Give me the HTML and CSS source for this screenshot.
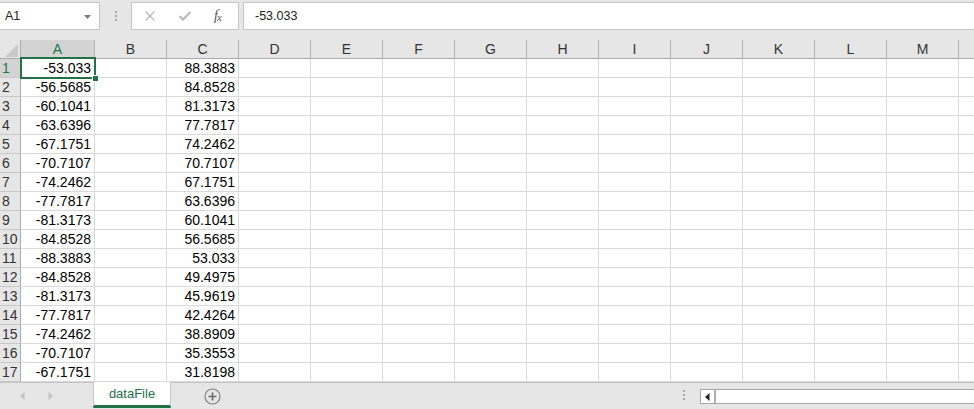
FILE: index.html
```html
<!DOCTYPE html>
<html>
<head>
<meta charset="utf-8">
<link rel="stylesheet" href="styles.css">
</head>
<body>
<div class="app">
  <div class="topbar">
    <div class="namebox">A1
      <svg class="caret" width="8" height="5" viewBox="0 0 8 5"><path d="M0 0H7L3.5 4Z" fill="#7a7a7a"/></svg>
    </div>
    <div class="grip"><i></i><i></i><i></i></div>
    <div class="fnbox">
      <svg class="ico" width="12" height="12" viewBox="0 0 12 12"><path d="M1.5 1.5L10.5 10.5M10.5 1.5L1.5 10.5" stroke="#b8b8b8" stroke-width="1.3" fill="none"/></svg>
      <svg class="ico" width="14" height="12" viewBox="0 0 14 12"><path d="M1.5 6.2L5 9.5L12.5 2" stroke="#b8b8b8" stroke-width="2" fill="none"/></svg>
      <span class="fx">f<span class="fxx">x</span></span>
    </div>
    <div class="formula">-53.033</div>
  </div>

  <div class="sheet">
    <div class="row head">
      <div class="corner"><svg width="13" height="13" viewBox="0 0 13 13"><path d="M13 0V13H0Z" fill="#c9c9c9"/></svg></div>
      <div class="ch sel colA">A</div><div class="ch">B</div><div class="ch">C</div><div class="ch">D</div><div class="ch">E</div><div class="ch">F</div><div class="ch">G</div><div class="ch">H</div><div class="ch">I</div><div class="ch">J</div><div class="ch">K</div><div class="ch">L</div><div class="ch">M</div><div class="ch last"></div>
    </div>
    <div class="row"><div class="rh sel">1</div><div class="c colA">-53.033</div><div class="c"></div><div class="c">88.3883</div><div class="c"></div><div class="c"></div><div class="c"></div><div class="c"></div><div class="c"></div><div class="c"></div><div class="c"></div><div class="c"></div><div class="c"></div><div class="c"></div><div class="c last"></div></div>
    <div class="row"><div class="rh">2</div><div class="c colA">-56.5685</div><div class="c"></div><div class="c">84.8528</div><div class="c"></div><div class="c"></div><div class="c"></div><div class="c"></div><div class="c"></div><div class="c"></div><div class="c"></div><div class="c"></div><div class="c"></div><div class="c"></div><div class="c last"></div></div>
    <div class="row"><div class="rh">3</div><div class="c colA">-60.1041</div><div class="c"></div><div class="c">81.3173</div><div class="c"></div><div class="c"></div><div class="c"></div><div class="c"></div><div class="c"></div><div class="c"></div><div class="c"></div><div class="c"></div><div class="c"></div><div class="c"></div><div class="c last"></div></div>
    <div class="row"><div class="rh">4</div><div class="c colA">-63.6396</div><div class="c"></div><div class="c">77.7817</div><div class="c"></div><div class="c"></div><div class="c"></div><div class="c"></div><div class="c"></div><div class="c"></div><div class="c"></div><div class="c"></div><div class="c"></div><div class="c"></div><div class="c last"></div></div>
    <div class="row"><div class="rh">5</div><div class="c colA">-67.1751</div><div class="c"></div><div class="c">74.2462</div><div class="c"></div><div class="c"></div><div class="c"></div><div class="c"></div><div class="c"></div><div class="c"></div><div class="c"></div><div class="c"></div><div class="c"></div><div class="c"></div><div class="c last"></div></div>
    <div class="row"><div class="rh">6</div><div class="c colA">-70.7107</div><div class="c"></div><div class="c">70.7107</div><div class="c"></div><div class="c"></div><div class="c"></div><div class="c"></div><div class="c"></div><div class="c"></div><div class="c"></div><div class="c"></div><div class="c"></div><div class="c"></div><div class="c last"></div></div>
    <div class="row"><div class="rh">7</div><div class="c colA">-74.2462</div><div class="c"></div><div class="c">67.1751</div><div class="c"></div><div class="c"></div><div class="c"></div><div class="c"></div><div class="c"></div><div class="c"></div><div class="c"></div><div class="c"></div><div class="c"></div><div class="c"></div><div class="c last"></div></div>
    <div class="row"><div class="rh">8</div><div class="c colA">-77.7817</div><div class="c"></div><div class="c">63.6396</div><div class="c"></div><div class="c"></div><div class="c"></div><div class="c"></div><div class="c"></div><div class="c"></div><div class="c"></div><div class="c"></div><div class="c"></div><div class="c"></div><div class="c last"></div></div>
    <div class="row"><div class="rh">9</div><div class="c colA">-81.3173</div><div class="c"></div><div class="c">60.1041</div><div class="c"></div><div class="c"></div><div class="c"></div><div class="c"></div><div class="c"></div><div class="c"></div><div class="c"></div><div class="c"></div><div class="c"></div><div class="c"></div><div class="c last"></div></div>
    <div class="row"><div class="rh">10</div><div class="c colA">-84.8528</div><div class="c"></div><div class="c">56.5685</div><div class="c"></div><div class="c"></div><div class="c"></div><div class="c"></div><div class="c"></div><div class="c"></div><div class="c"></div><div class="c"></div><div class="c"></div><div class="c"></div><div class="c last"></div></div>
    <div class="row"><div class="rh">11</div><div class="c colA">-88.3883</div><div class="c"></div><div class="c">53.033</div><div class="c"></div><div class="c"></div><div class="c"></div><div class="c"></div><div class="c"></div><div class="c"></div><div class="c"></div><div class="c"></div><div class="c"></div><div class="c"></div><div class="c last"></div></div>
    <div class="row"><div class="rh">12</div><div class="c colA">-84.8528</div><div class="c"></div><div class="c">49.4975</div><div class="c"></div><div class="c"></div><div class="c"></div><div class="c"></div><div class="c"></div><div class="c"></div><div class="c"></div><div class="c"></div><div class="c"></div><div class="c"></div><div class="c last"></div></div>
    <div class="row"><div class="rh">13</div><div class="c colA">-81.3173</div><div class="c"></div><div class="c">45.9619</div><div class="c"></div><div class="c"></div><div class="c"></div><div class="c"></div><div class="c"></div><div class="c"></div><div class="c"></div><div class="c"></div><div class="c"></div><div class="c"></div><div class="c last"></div></div>
    <div class="row"><div class="rh">14</div><div class="c colA">-77.7817</div><div class="c"></div><div class="c">42.4264</div><div class="c"></div><div class="c"></div><div class="c"></div><div class="c"></div><div class="c"></div><div class="c"></div><div class="c"></div><div class="c"></div><div class="c"></div><div class="c"></div><div class="c last"></div></div>
    <div class="row"><div class="rh">15</div><div class="c colA">-74.2462</div><div class="c"></div><div class="c">38.8909</div><div class="c"></div><div class="c"></div><div class="c"></div><div class="c"></div><div class="c"></div><div class="c"></div><div class="c"></div><div class="c"></div><div class="c"></div><div class="c"></div><div class="c last"></div></div>
    <div class="row"><div class="rh">16</div><div class="c colA">-70.7107</div><div class="c"></div><div class="c">35.3553</div><div class="c"></div><div class="c"></div><div class="c"></div><div class="c"></div><div class="c"></div><div class="c"></div><div class="c"></div><div class="c"></div><div class="c"></div><div class="c"></div><div class="c last"></div></div>
    <div class="row"><div class="rh">17</div><div class="c colA">-67.1751</div><div class="c"></div><div class="c">31.8198</div><div class="c"></div><div class="c"></div><div class="c"></div><div class="c"></div><div class="c"></div><div class="c"></div><div class="c"></div><div class="c"></div><div class="c"></div><div class="c"></div><div class="c last"></div></div>

    <div class="selection"></div>
    <div class="handle"></div>
  </div>

  <div class="tabbar">
    <div class="nav">
      <svg width="5" height="8" viewBox="0 0 5 8"><path d="M4.5 0V8L0 4Z" fill="#c3c3c3"/></svg>
      <svg width="5" height="8" viewBox="0 0 5 8"><path d="M0.5 0V8L5 4Z" fill="#c3c3c3"/></svg>
    </div>
    <div class="tab">dataFile</div>
    <div class="add">
      <svg width="17" height="17" viewBox="0 0 17 17"><circle cx="8.5" cy="8.5" r="7.5" fill="none" stroke="#808080" stroke-width="1.2"/><path d="M8.5 4.5V12.5M4.5 8.5H12.5" stroke="#6a6a6a" stroke-width="1.6"/></svg>
    </div>
    <div class="spacer"></div>
    <div class="grip small"><i></i><i></i><i></i></div>
    <div class="hscroll">
      <div class="sbtn"><svg width="5" height="8" viewBox="0 0 5 8"><path d="M4.5 0V8L0 4Z" fill="#222"/></svg></div>
      <div class="track"></div>
    </div>
  </div>
</div>
</body>
</html>
```

FILE: styles.css
```css
html, body {
  margin: 0;
  padding: 0;
}
body {
  width: 974px;
  height: 409px;
  overflow: hidden;
  background: #e6e6e6;
  font-family: "Liberation Sans", Arial, sans-serif;
}
.app {
  display: flex;
  flex-direction: column;
  height: 409px;
}

/* ---------- formula bar ---------- */
.topbar {
  height: 40px;
  box-sizing: border-box;
  padding-top: 2px;
  display: flex;
  align-items: flex-start;
  flex: none;
}
.namebox {
  width: 100px;
  height: 28px;
  box-sizing: border-box;
  background: #fff;
  border: 1px solid #c6c6c6;
  border-left: none;
  display: flex;
  align-items: center;
  padding-left: 5px;
  font-size: 12.5px;
  color: #222;
  position: relative;
}
.caret {
  position: absolute;
  right: 7px;
  top: 12px;
}
.grip {
  width: 31px;
  height: 28px;
  display: flex;
  flex-direction: column;
  align-items: center;
  justify-content: center;
  gap: 2px;
}
.grip i {
  display: block;
  width: 2px;
  height: 2px;
  background: #a8a8a8;
}
.fnbox {
  width: 108px;
  height: 28px;
  box-sizing: border-box;
  background: #fff;
  border: 1px solid #c6c6c6;
  display: flex;
  align-items: center;
  padding-left: 12px;
  gap: 22px;
}
.fnbox .ico {
  display: block;
}
.fx {
  font-family: "Liberation Serif", "Times New Roman", serif;
  font-style: italic;
  font-size: 14px;
  color: #555;
  margin-left: 0;
  letter-spacing: -1px;
}
.fxx {
  font-size: 11px;
  position: relative;
  top: 1px;
}
.formula {
  flex: 1;
  margin-left: 4px;
  height: 28px;
  box-sizing: border-box;
  background: #fff;
  border: 1px solid #c6c6c6;
  border-right: none;
  padding-left: 11px;
  font-size: 12.5px;
  color: #222;
  display: flex;
  align-items: center;
}

/* ---------- grid ---------- */
.sheet {
  position: relative;
  flex: none;
  background: #fff;
}
.row {
  display: flex;
  height: 19px;
}
.corner {
  width: 21px;
  height: 19px;
  box-sizing: border-box;
  flex: none;
  background: #e6e6e6;
  border-right: 1px solid #ababab;
  border-bottom: 1px solid #ababab;
  display: flex;
  align-items: flex-end;
  justify-content: flex-end;
  padding: 0 2px 1px 0;
}
.corner svg {
  display: block;
}
.ch {
  width: 72px;
  height: 19px;
  box-sizing: border-box;
  flex: none;
  background: #e6e6e6;
  border-right: 1px solid #b4b4b4;
  border-bottom: 1px solid #ababab;
  text-align: center;
  font-size: 14px;
  line-height: 19px;
  color: #333;
}
.ch.sel {
  background: #d3d3d3;
  color: #217346;
}
.colA {
  width: 74px;
}
.last {
  width: 30px;
  border-right: none;
}
.rh {
  width: 21px;
  height: 19px;
  box-sizing: border-box;
  flex: none;
  background: #e6e6e6;
  border-right: 1px solid #ababab;
  border-bottom: 1px solid #c8c8c8;
  padding-left: 2px;
  font-size: 14px;
  line-height: 19px;
  color: #333;
}
.rh.sel {
  background: #d3d3d3;
  color: #217346;
}
.c {
  width: 72px;
  height: 19px;
  box-sizing: border-box;
  flex: none;
  border-right: 1px solid #d9d9d9;
  border-bottom: 1px solid #d9d9d9;
  text-align: right;
  padding-right: 3px;
  font-size: 14px;
  line-height: 19px;
  color: #000;
  white-space: nowrap;
}
.c.colA {
  width: 74px;
}
.c.last {
  width: 30px;
  border-right: none;
}
.selection {
  position: absolute;
  left: 20px;
  top: 17px;
  width: 76px;
  height: 22px;
  box-sizing: border-box;
  border: 2px solid #217346;
}
.handle {
  position: absolute;
  left: 92px;
  top: 35px;
  width: 5px;
  height: 5px;
  background: #217346;
  border: 1px solid #fff;
  box-sizing: content-box;
}

/* ---------- sheet tabs ---------- */
.tabbar {
  flex: none;
  height: 27px;
  box-sizing: border-box;
  border-top: 1px solid #c4c4c4;
  background: #e6e6e6;
  display: flex;
  align-items: flex-start;
}
.nav {
  width: 93px;
  height: 26px;
  display: flex;
  align-items: center;
  padding-left: 20px;
  box-sizing: border-box;
  gap: 23px;
}
.nav svg {
  display: block;
}
.tab {
  width: 78px;
  height: 26px;
  box-sizing: border-box;
  margin-top: -1px;
  background: #fff;
  border-left: 1px solid #c6c6c6;
  border-right: 1px solid #c6c6c6;
  border-bottom: 3px solid #217346;
  color: #217346;
  font-size: 13px;
  text-align: center;
  line-height: 24px;
}
.add {
  margin-left: 33px;
  height: 26px;
  display: flex;
  align-items: center;
}
.add svg {
  display: block;
}
.spacer {
  flex: 1;
}
.grip.small {
  width: 32px;
  height: 26px;
  gap: 2px;
  margin-top: -1px;
}
.hscroll {
  width: 290px;
  height: 15px;
  margin-top: 6px;
  box-sizing: border-box;
  border: 1px solid #a6a6a6;
  border-right: none;
  background: #fff;
  display: flex;
  flex: none;
  margin-right: -16px;
}
.sbtn {
  width: 15px;
  height: 13px;
  box-sizing: border-box;
  border-right: 2px solid #b0b0b0;
  display: flex;
  align-items: center;
  padding-left: 4px;
}
.sbtn svg {
  display: block;
}
.track {
  flex: 1;
}
```
